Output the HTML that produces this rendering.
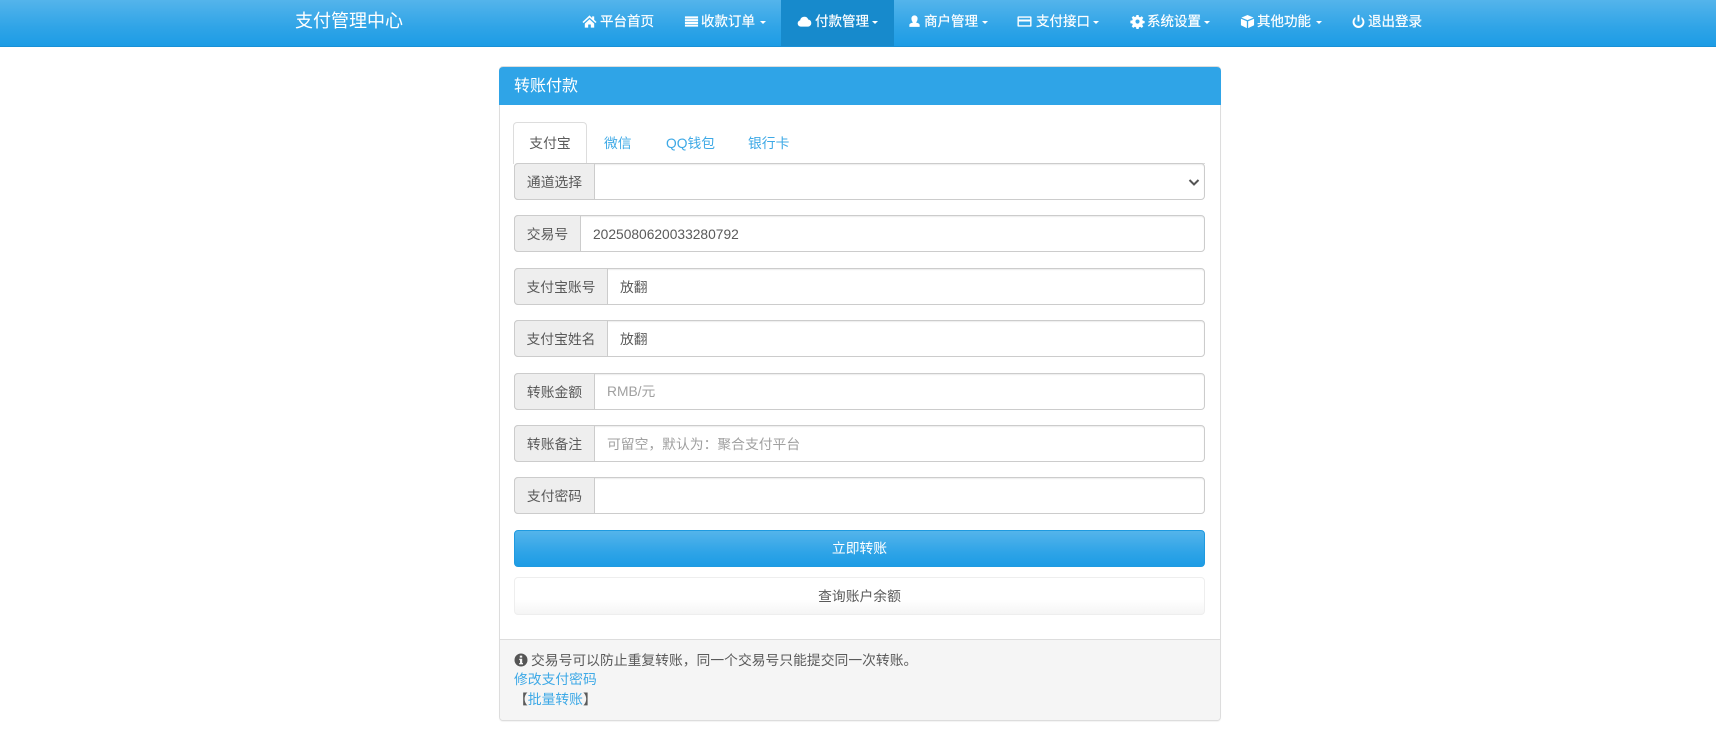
<!DOCTYPE html>
<html lang="zh">
<head>
<meta charset="utf-8">
<title>转账付款</title>
<style>
*{box-sizing:border-box}
html,body{margin:0;padding:0;width:1716px;height:731px;background:#fff;overflow:hidden}
body{font-family:"Liberation Sans","Noto Sans CJK SC",sans-serif;font-size:13.8px;color:#5a5a5a;position:relative}
.a{position:absolute;white-space:nowrap}
#nav{left:0;top:0;width:1716px;height:47px;background:linear-gradient(#54b4eb,#2fa4e7 60%,#1d9ce5);border-bottom:1px solid #1990d6}
#act{left:781px;top:0;width:113px;height:46px;background:#178acc}
#brand{left:295px;top:8px;font-size:18px;line-height:26px;color:#fff}
.n{top:13px;font-size:13.5px;line-height:18px;color:#fff;-webkit-text-stroke:.2px #fff}
.c{top:21px;width:0;height:0;border-left:3.5px solid transparent;border-right:3.5px solid transparent;border-top:3.5px solid #fff}
.i{top:14px;width:15px;height:15px;fill:#fff}
#panel{left:499px;top:66px;width:722px;height:655px;border:1px solid #ddd;border-radius:4px;overflow:hidden;background:#fff;box-shadow:0 1px 1px rgba(0,0,0,.05)}
#head{left:499px;top:67px;width:722px;height:38px;background:#2fa4e7;border-radius:4px 4px 0 0}
#title{left:514px;top:75px;font-size:16px;line-height:23px;color:#fff}
#tab{left:513px;top:122px;width:74px;height:42px;background:#fff;border:1px solid #ddd;border-bottom:0;border-radius:4px 4px 0 0;text-align:center;line-height:41px}
.t{top:133px;line-height:21px;color:#3ea9e6}
#tabline{left:514px;top:163px;width:691px;height:1px;background:#ddd}
.g{left:514px;width:691px;height:37px;border:1px solid #ccc;border-radius:4px;background:#fff;box-shadow:inset 0 1px 1px rgba(0,0,0,.075)}
.l{left:514px;height:37px;background:#eee;border:1px solid #ccc;border-radius:4px 0 0 4px;line-height:37px;text-align:center;color:#5a5a5a}
.v{line-height:20px;color:#5a5a5a}
.p{line-height:20px;color:#a0a0a0}
#btn1{left:514px;top:530px;width:691px;height:37px;border-radius:4px;background:linear-gradient(#54b4eb,#2fa4e7 60%,#1d9ce5);border:1px solid #1f9ae0;color:#fff;text-align:center;line-height:35px}
#btn2{left:514px;top:577px;width:691px;height:38px;border-radius:4px;background:linear-gradient(#fff,#fff 60%,#f5f5f5);border:1px solid #eee;color:#5a5a5a;text-align:center;line-height:38px}
#foot{left:500px;top:639px;width:720px;height:81px;background:#f5f5f5;border-top:1px solid #ddd;border-radius:0 0 3px 3px}
.f{left:514px;line-height:20px;color:#5a5a5a}
.f span{color:#3ea9e6}
#sel{left:1187px;top:175px;width:14px;height:14px}
</style>
</head>
<body>
<div class="a" id="nav"></div>
<div class="a" id="act"></div>
<div class="a" id="brand">支付管理中心</div>

<svg class="a i" style="left:582px" viewBox="0 0 16 16"><path d="M8 1.500 .5 8.500l1.200 1.100L8 3.800l6.300 5.800 1.200-1.100-2.500-2.300V2.500h-2.200v1.800zM3 10.200 8 5.600l5 4.600V14.500H9.400v-3.300H6.600v3.300H3z"/></svg>
<div class="a n" style="left:600px">平台首页</div>

<svg class="a i" style="left:684px" viewBox="0 0 16 16"><path d="M1 2.500h14v2.300H1zM1 5.500h14v2.200H1zM1 8.400h14v2.200H1zM1 11.300h14v2.200H1z"/></svg>
<div class="a n" style="left:701px">收款订单</div><div class="a c" style="left:760px"></div>

<svg class="a i" style="left:797px" viewBox="0 0 16 16"><path d="M4 13.500a3.500 3.500 0 0 1-.6-6.900A4.500 4.500 0 0 1 12 5.800a3.900 3.900 0 0 1 0 7.700z"/></svg>
<div class="a n" style="left:815px">付款管理</div><div class="a c" style="left:872px"></div>

<svg class="a i" style="left:907px" viewBox="0 0 16 16"><path d="M8 1.500a3.300 3.300 0 0 1 3.300 3.600c0 1.700-1 3.400-1.700 4 2.500.6 3.900 1.500 3.900 2.600v2H2.500v-2c0-1.100 1.400-2 3.900-2.600-.7-.6-1.700-2.300-1.700-4A3.300 3.300 0 0 1 8 1.500z"/></svg>
<div class="a n" style="left:924px">商户管理</div><div class="a c" style="left:982px"></div>

<svg class="a i" style="left:1017px" viewBox="0 0 16 16"><path fill-rule="evenodd" d="M1.500 2.500h13a1 1 0 0 1 1 1v9a1 1 0 0 1-1 1h-13a1 1 0 0 1-1-1v-9a1 1 0 0 1 1-1zM2 4v1.800h12V4zM2 8v4h12V8z"/></svg>
<div class="a n" style="left:1036px">支付接口</div><div class="a c" style="left:1093px"></div>

<svg class="a i" style="left:1130px" viewBox="0 0 16 16"><path fill-rule="evenodd" d="M6.800 1h2.400l.3 2 1.300.6 1.700-1.200 1.700 1.700-1.200 1.700.6 1.300 2 .3v2.400l-2 .3-.6 1.300 1.200 1.700-1.700 1.700-1.700-1.200-1.300.6-.3 2H6.800l-.3-2-1.300-.6-1.700 1.200-1.700-1.700 1.200-1.700-.6-1.300-2-.3V7.100l2-.3.6-1.300-1.200-1.700 1.700-1.700 1.700 1.200 1.300-.6zM8 5.800a2.200 2.200 0 1 0 0 4.400 2.200 2.200 0 0 0 0-4.400z"/></svg>
<div class="a n" style="left:1147px">系统设置</div><div class="a c" style="left:1204px"></div>

<svg class="a i" style="left:1240px" viewBox="0 0 16 16"><path d="M8 1 14.500 3.800 8 6.500 1.500 3.800zM1 5l6.300 2.700V15L1 12zM15 5v7l-6.300 3V7.700z"/></svg>
<div class="a n" style="left:1257px">其他功能</div><div class="a c" style="left:1316px"></div>

<svg class="a i" style="left:1351px" viewBox="0 0 16 16"><path d="M7 1h2v7H7z"/><path d="M4.800 3.200v2.300a4.300 4.300 0 1 0 6.400 0V3.200a6.300 6.300 0 1 1-6.400 0z"/></svg>
<div class="a n" style="left:1368px">退出登录</div>

<div class="a" id="panel"></div>
<div class="a" id="head"></div>
<div class="a" id="title">转账付款</div>

<div class="a" id="tabline"></div>
<div class="a" id="tab">支付宝</div>
<div class="a t" style="left:604px">微信</div>
<div class="a t" style="left:666px">QQ钱包</div>
<div class="a t" style="left:748px">银行卡</div>

<div class="a g" style="top:163px"></div>
<div class="a l" style="top:163px;width:81px">通道选择</div>
<svg class="a" id="sel" viewBox="0 0 14 14"><path d="M2.500 5 7 9.500 11.500 5" fill="none" stroke="#555" stroke-width="2"/></svg>

<div class="a g" style="top:215px"></div>
<div class="a l" style="top:215px;width:67px">交易号</div>
<div class="a v" style="left:593px;top:225px">2025080620033280792</div>

<div class="a g" style="top:268px"></div>
<div class="a l" style="top:268px;width:94px">支付宝账号</div>
<div class="a v" style="left:620px;top:278px">放翻</div>

<div class="a g" style="top:320px"></div>
<div class="a l" style="top:320px;width:94px">支付宝姓名</div>
<div class="a v" style="left:620px;top:330px">放翻</div>

<div class="a g" style="top:373px"></div>
<div class="a l" style="top:373px;width:81px">转账金额</div>
<div class="a p" style="left:607px;top:382px">RMB/元</div>

<div class="a g" style="top:425px"></div>
<div class="a l" style="top:425px;width:81px">转账备注</div>
<div class="a p" style="left:607px;top:435px">可留空，默认为：聚合支付平台</div>

<div class="a g" style="top:477px"></div>
<div class="a l" style="top:477px;width:81px">支付密码</div>

<div class="a" id="btn1">立即转账</div>
<div class="a" id="btn2">查询账户余额</div>

<div class="a" id="foot"></div>
<svg class="a" style="left:514px;top:653px;width:14px;height:14px" viewBox="0 0 14 14"><circle cx="7" cy="7" r="6.500" fill="#555"/><path d="M5.800 2.600h2.400v2H5.800zM5.200 5.700h3v4.300h.8v1.400H5.200V10H6V7.100h-.8z" fill="#f5f5f5"/></svg>
<div class="a f" style="left:531px;top:651px">交易号可以防止重复转账，同一个交易号只能提交同一次转账。</div>
<div class="a f" style="top:670px"><span>修改支付密码</span></div>
<div class="a f" style="top:690px">【<span>批量转账</span>】</div>
</body>
</html>
